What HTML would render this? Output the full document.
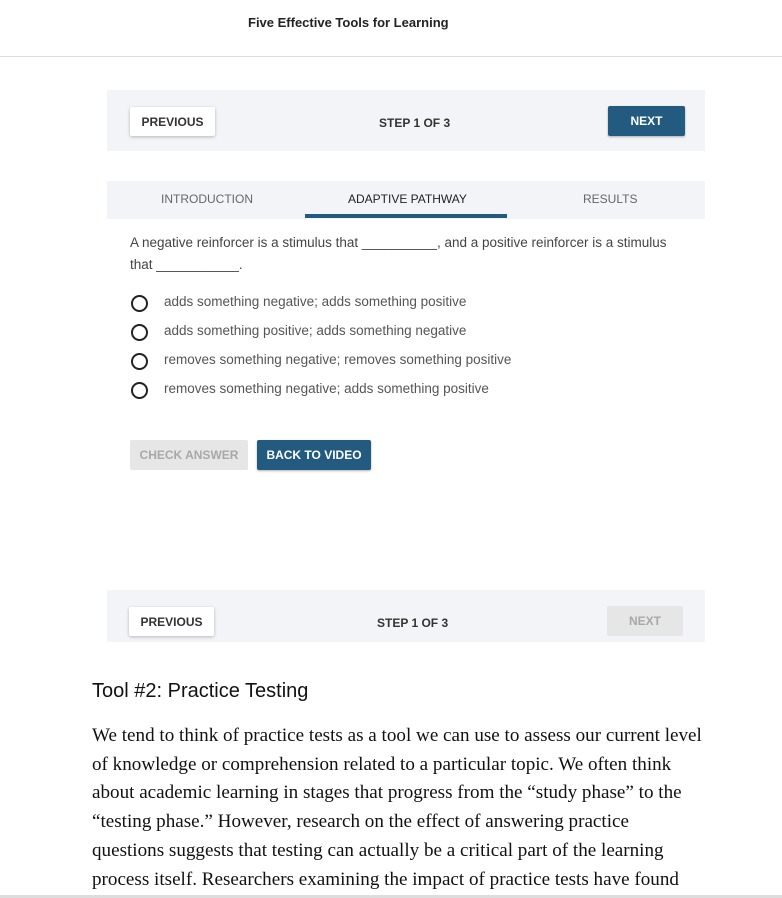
<!DOCTYPE html>
<html><head><style>
*{margin:0;padding:0;box-sizing:border-box}
body{width:782px;height:898px;overflow:hidden;background:#fff;font-family:"Liberation Sans",sans-serif;position:relative}
.hdr{position:absolute;left:0;top:0;width:782px;height:57px;border-bottom:1px solid #ddd}
.hdr span{position:absolute;left:248px;top:15px;font-size:13px;font-weight:bold;color:#222}
.panel{position:absolute;left:107px;width:598px;background:#f3f4f7}
.btn{position:absolute;font-size:12px;font-weight:bold;display:flex;align-items:center;justify-content:center;border-radius:2px}
.prev{background:#fff;color:#333;box-shadow:0 1px 3px rgba(0,0,0,.25)}
.next{background:#225a80;color:#fff;box-shadow:0 1px 2px rgba(0,0,0,.3)}
.dis{background:#e6e6e6;color:#a8a8a8}
.step{position:absolute;font-size:12px;font-weight:bold;color:#333}
.tab{position:absolute;top:192px;font-size:12px;color:#666}
.q{position:absolute;left:130px;font-size:13.5px;color:#444;line-height:22px;white-space:nowrap}
.opt{position:absolute;left:131px;font-size:13.5px;color:#555}
.opt i{position:absolute;left:0;top:1px;width:17px;height:17px;border:2px solid #222;border-radius:50%}
.opt span{position:absolute;left:33px;white-space:nowrap;top:0}
h2{position:absolute;left:92px;top:680px;font-size:20px;font-weight:normal;color:#111}
p{position:absolute;left:92px;top:722px;font-family:"Liberation Serif",serif;font-size:19.1px;line-height:28.7px;color:#111;white-space:nowrap}
.bot{position:absolute;left:0;top:895px;width:782px;height:3px;background:#ddd}
</style></head><body>
<div class="hdr"><span>Five Effective Tools for Learning</span></div>
<div class="panel" style="top:90px;height:61px"></div>
<div class="btn prev" style="left:130px;top:107px;width:85px;height:29px">PREVIOUS</div>
<div class="step" style="left:379px;top:116px">STEP 1 OF 3</div>
<div class="btn next" style="left:608px;top:106px;width:77px;height:30px">NEXT</div>
<div class="panel" style="top:181px;height:38px"></div>
<div class="tab" style="left:161px">INTRODUCTION</div>
<div class="tab" style="left:348px;color:#222">ADAPTIVE PATHWAY</div>
<div class="tab" style="left:583px">RESULTS</div>
<div style="position:absolute;left:305px;top:214px;width:202px;height:4px;background:#225a80"></div>
<div class="q" style="top:232px">A negative reinforcer is a stimulus that __________, and a positive reinforcer is a stimulus<br>that ___________.</div>
<div class="opt" style="top:294px"><i></i><span>adds something negative; adds something positive</span></div>
<div class="opt" style="top:323px"><i></i><span>adds something positive; adds something negative</span></div>
<div class="opt" style="top:352px"><i></i><span>removes something negative; removes something positive</span></div>
<div class="opt" style="top:381px"><i></i><span>removes something negative; adds something positive</span></div>
<div class="btn dis" style="left:130px;top:440px;width:118px;height:30px">CHECK ANSWER</div>
<div class="btn next" style="left:257px;top:440px;width:114px;height:30px">BACK TO VIDEO</div>
<div class="panel" style="top:590px;height:52px"></div>
<div class="btn prev" style="left:129px;top:607px;width:85px;height:29px">PREVIOUS</div>
<div class="step" style="left:377px;top:616px">STEP 1 OF 3</div>
<div class="btn dis" style="left:607px;top:606px;width:76px;height:30px">NEXT</div>
<h2>Tool #2: Practice Testing</h2>
<p>We tend to think of practice tests as a tool we can use to assess our current level<br>of knowledge or comprehension related to a particular topic. We often think<br>about academic learning in stages that progress from the “study phase” to the<br>“testing phase.” However, research on the effect of answering practice<br>questions suggests that testing can actually be a critical part of the learning<br>process itself. Researchers examining the impact of practice tests have found</p>
<div class="bot"></div>
</body></html>
